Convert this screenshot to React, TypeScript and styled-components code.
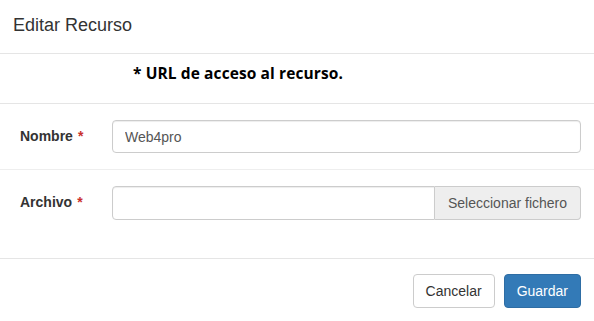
import styled, { createGlobalStyle } from 'styled-components'

const GlobalStyle = createGlobalStyle`
  html, body {
    margin: 0;
    padding: 0;
    background: #fff;
  }
  body {
    font-family: "Liberation Sans", Arial, sans-serif;
    font-size: 14px;
    color: #333;
  }
  * {
    box-sizing: border-box;
  }
`

const Modal = styled.div`
  width: 594px;
  height: 321px;
  background: #fff;
  overflow: hidden;
`

const Header = styled.div`
  height: 54px;
  display: flex;
  align-items: center;
  padding: 0 13px 2px;
  border-bottom: 1px solid #e5e5e5;
`

const Title = styled.h4`
  margin: 0;
  font-size: 18px;
  font-weight: normal;
  color: #333;
`

const Note = styled.div`
  height: 50px;
  display: flex;
  align-items: center;
  padding: 0 0 12px 133px;
  border-bottom: 1px solid #e5e5e5;
  font-family: "Open Sans", sans-serif;
  font-weight: 700;
  font-size: 15.5px;
  letter-spacing: 0.1px;
  color: #000;
`

const Row = styled.div<{ $h: number; $line?: boolean }>`
  height: ${({ $h }) => $h}px;
  display: flex;
  align-items: flex-start;
  padding: 16px 13px 0 20px;
  border-bottom: ${({ $line }) => ($line ? '1px solid #eee' : 'none')};
`

const Label = styled.label`
  width: 92px;
  flex: none;
  font-weight: 700;
  font-size: 14px;
  line-height: 33px;
  color: #333;
`

const Req = styled.span`
  color: #c9302c;
  margin-left: 5px;
`

const Input = styled.input`
  flex: 1;
  height: 33px;
  padding: 6px 12px;
  border: 1px solid #ccc;
  border-radius: 4px;
  font: 14px "Liberation Sans", Arial, sans-serif;
  color: #555;
  outline: none;
  box-shadow: inset 0 1px 1px rgba(0, 0, 0, 0.075);
`

const Group = styled.div`
  flex: 1;
  display: flex;
  height: 34px;
`

const GroupInput = styled(Input)`
  border-radius: 4px 0 0 4px;
  height: 34px;
`

const Addon = styled.span`
  width: 146px;
  flex: none;
  display: flex;
  align-items: center;
  justify-content: center;
  background: #eee;
  border: 1px solid #ccc;
  border-left: none;
  border-radius: 0 4px 4px 0;
  color: #555;
  font-size: 14px;
`

const Footer = styled.div`
  display: flex;
  justify-content: flex-end;
  gap: 9px;
  padding: 15px 13px 0;
  border-top: 1px solid #e5e5e5;
`

const Button = styled.button<{ $primary?: boolean }>`
  height: 34px;
  padding: 0 12px;
  font: 14px "Liberation Sans", Arial, sans-serif;
  border-radius: 4px;
  border: 1px solid ${({ $primary }) => ($primary ? '#2e6da4' : '#ccc')};
  background: ${({ $primary }) => ($primary ? '#337ab7' : '#fff')};
  color: ${({ $primary }) => ($primary ? '#fff' : '#333')};
`

export default function App() {
  return (
    <Modal>
      <GlobalStyle />
      <Header>
        <Title>Editar Recurso</Title>
      </Header>
      <Note>* URL de acceso al recurso.</Note>
      <Row $h={66} $line>
        <Label>
          Nombre<Req>*</Req>
        </Label>
        <Input defaultValue="Web4pro" />
      </Row>
      <Row $h={88}>
        <Label>
          Archivo<Req>*</Req>
        </Label>
        <Group>
          <GroupInput />
          <Addon>Seleccionar fichero</Addon>
        </Group>
      </Row>
      <Footer>
        <Button>Cancelar</Button>
        <Button $primary>Guardar</Button>
      </Footer>
    </Modal>
  )
}
